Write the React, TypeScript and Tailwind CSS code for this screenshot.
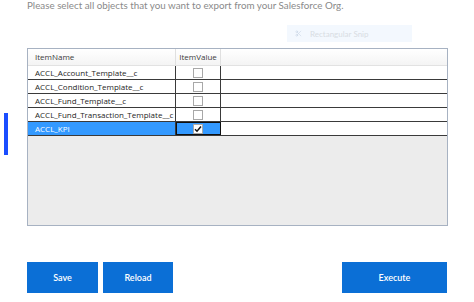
import { Scissors } from 'lucide-react';

interface Row {
  name: string;
  checked: boolean;
  selected?: boolean;
}

const ROWS: Row[] = [
  { name: 'ACCL_Account_Template__c', checked: false },
  { name: 'ACCL_Condition_Template__c', checked: false },
  { name: 'ACCL_Fund_Template__c', checked: false },
  { name: 'ACCL_Fund_Transaction_Template__c', checked: false },
  { name: 'ACCL_KPI', checked: true, selected: true },
];

function CheckBox({ checked }: { checked: boolean }) {
  return (
    <span className="flex h-[10px] w-[10px] items-center justify-center border border-[#a8a8a8] bg-white">
      {checked && (
        <svg width="8" height="8" viewBox="0 0 8 8">
          <path d="M1 4.2 L3 6.2 L7 1.5" fill="none" stroke="#111" strokeWidth="1.5" />
        </svg>
      )}
    </span>
  );
}

export default function App() {
  return (
    <div className="relative h-[302px] w-[474px] overflow-hidden bg-white font-['Lato','Liberation_Sans',sans-serif]">
      {/* left indicator */}
      <div className="absolute left-[4px] top-[113px] h-[42px] w-[4px] bg-[#1a4dff]" />

      {/* ghost snip toolbar */}
      <div className="absolute left-[287px] top-[25px] flex h-[17px] w-[125px] items-center gap-2 bg-[#f3f8fe] px-2 text-[8px] text-[#d8dde3]">
        <Scissors size={7} className="text-[#c9d6e6]" />
        <span>Rectangular Snip</span>
      </div>

      <div className="pl-[27px] text-[9.8px] leading-[11px] text-[#8a8a8a]">
        Please select all objects that you want to export from your Salesforce Org.
      </div>

      {/* data grid */}
      <div className="ml-[27px] mt-[37px] flex h-[178px] w-[421px] flex-col border border-[#a7b2c2] bg-[#ececec] font-['Open_Sans','Noto_Sans',sans-serif] text-[8px] text-[#1e1e1e]">
        <div className="flex h-[17px] shrink-0 border-b border-[#e2e2e2] bg-gradient-to-b from-white to-[#f4f4f4] text-[#3c3c3c]">
          <div className="flex w-[148px] items-center border-r border-[#e0e0e0] pl-[7px]">ItemName</div>
          <div className="flex w-[45px] items-center justify-center border-r border-[#e0e0e0]">ItemValue</div>
          <div className="flex-1" />
        </div>
        {ROWS.map((r) => (
          <div key={r.name} className="flex h-[14px] shrink-0 border-b border-[#3a3a3a] bg-white">
            <div
              className={`flex w-[148px] items-center whitespace-nowrap border-r border-[#3a3a3a] pl-[7px] ${
                r.selected ? 'bg-[#3399ff] text-white' : ''
              }`}
            >
              {r.name}
            </div>
            <div
              className={`flex w-[45px] items-center justify-center border-r border-[#3a3a3a] ${
                r.selected ? 'bg-[#3399ff] outline outline-1 -outline-offset-1 outline-[#101010]' : ''
              }`}
            >
              <CheckBox checked={r.checked} />
            </div>
            <div className="flex-1" />
          </div>
        ))}
      </div>

      {/* buttons */}
      <div className="ml-[27px] mt-[36px] flex w-[420px] gap-[5px] text-[9px] font-semibold text-white">
        <button className="h-[31px] w-[71px] bg-[#0b6fd6]">Save</button>
        <button className="h-[31px] w-[70px] bg-[#0b6fd6]">Reload</button>
        <button className="ml-auto h-[31px] w-[105px] bg-[#0b6fd6]">Execute</button>
      </div>
    </div>
  );
}
